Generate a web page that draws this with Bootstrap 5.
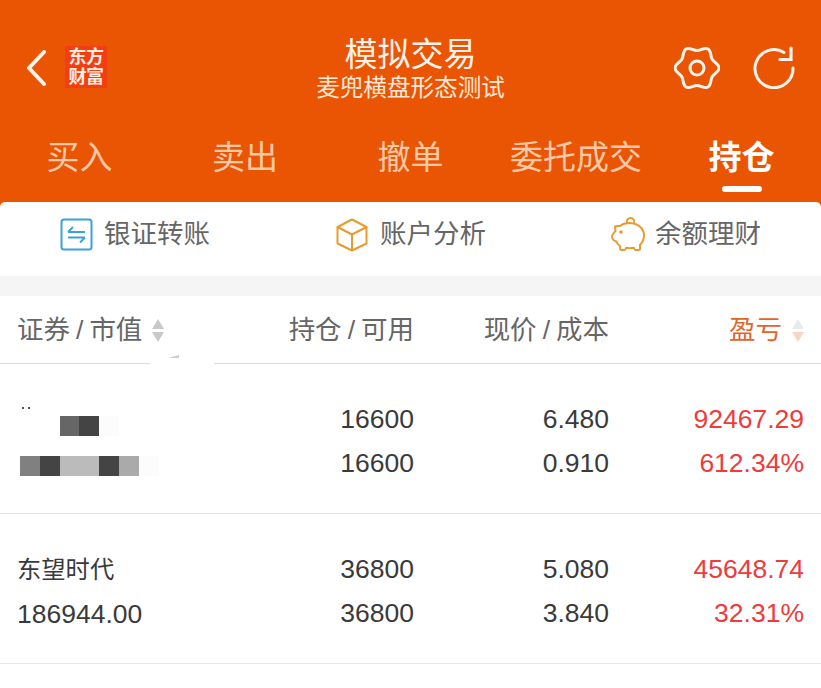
<!DOCTYPE html>
<html lang="zh-CN">
<head>
  <meta charset="UTF-8" />
  <meta name="viewport" content="width=device-width, initial-scale=1.0"/>
  <title>模拟交易</title>
  <link href="https://cdn.jsdelivr.net/npm/bootstrap@5.3.2/dist/css/bootstrap.min.css" rel="stylesheet"/>
  <style>
    html, body { height: 688px; overflow: hidden; }
    body { background: #fff; font-family: "Liberation Sans", "Noto Sans CJK SC", sans-serif; color: #3a3a3a; }
    .top-head { background: #ea5504; height: 212px; color: #fff; }
    .title-row { height: 122px; padding: 42px 26px 0 25px; }
    .back-icon { margin-top: 8px; }
    .logo-box { width: 42px; height: 42px; margin: 4px 0 0 18px; padding-top: 1px; background: #f43e12; color: #fdeee2; font-size: 18px; line-height: 20px; font-weight: 700; text-align: center; letter-spacing: -.5px; }
    .title-main { font-size: 33px; line-height: 44px; color: #fdf3ea; }
    .title-sub { font-size: 23.6px; line-height: 26px; color: #fde9da; margin-top: -2px; }
    .title-mid { left: 0; right: 0; top: 33px; }
    .head-icons { gap: 33px; margin-top: 3px; }
    .tab-row { display: grid; grid-template-columns: repeat(5, 165.5px); justify-content: center; height: 80px; margin-top: -4px; }
    .tab-item { font-size: 33px; line-height: 44px; padding-top: 18px; color: #f9c9a6; text-align: center; }
    .tab-on { color: #fff; font-weight: 700; }
    .tab-on::after { content: ""; display: block; width: 40px; height: 6px; border-radius: 3px; background: #fff; margin: 6px auto 0; }
    .panel { background: #fff; border-radius: 5px 5px 0 0; margin-top: -10px; height: 74px; padding-bottom: 9px; }
    .quick-item { font-size: 26.5px; color: #666; gap: 11px; }
    .q-one { margin-left: 60px; }
    .q-two { margin-left: 126px; gap: 12px; }
    .q-three { margin-left: 125px; gap: 9px; }
    .gray-gap { background: #f5f5f5; height: 20px; }
    .cols { display: grid; grid-template-columns: 197px 200px 195px 195px; padding: 0 17px; }
    .table-head { height: 68px; border-bottom: 1px solid #ddd; font-size: 26.5px; color: #666; line-height: 69px; }
    .sl { margin: 0 6px; }
    .sort-arrows { gap: 3px; margin-left: 10px; }
    .arr { width: 0; height: 0; border-left: 6.5px solid transparent; border-right: 6.5px solid transparent; }
    .arr-up { border-bottom: 10px solid #c9c9c9; }
    .arr-down { border-top: 10px solid #c9c9c9; }
    .arr-up.pale { border-bottom-color: #e9e9ee; }
    .arr-down.pale { border-top-color: #f8d5c3; }
    .profit-head { color: #e2662a; }
    .line-fix { left: 150px; top: 352px; width: 64px; height: 13px; background: #fff; }
    .line-fix::before { content: ""; position: absolute; left: 18px; top: 3px; border-left: 11px solid transparent; border-bottom: 3px solid #ccc; }
    .stock-row { height: 150px; border-bottom: 1px solid #e6e6e6; padding-top: 33px; font-size: 26.5px; line-height: 44px; }
    .stock-name { font-size: 24.3px; }
    .up-num { color: #ee3b3b; }
    .specks { display: flex; gap: 4px; height: 2px; margin: 10px 0 7px 5px; }
    .speck { width: 2px; height: 2px; background: #555; }
    .mosaic { display: flex; height: 20px; margin-left: 3px; }
    .mosaic-low { margin-top: 20px; }
    .tile { width: 19.8px; height: 20px; }
    .t-skip { background: transparent; }
    .t1 { background: #fcfcfc; } .t2 { background: #666; } .t3 { background: #444; }
    .t4 { background: #808080; } .t5 { background: #bbb; } .t6 { background: #aaa; }
  </style>
</head>
<body>
  <div class="top-head position-relative">
    <div class="title-row d-flex align-items-start">
      <svg width="22" height="36" viewBox="0 0 22 36" class="back-icon flex-shrink-0"><path d="M19 2 4 18l15 16" fill="none" stroke="#fdf3ea" stroke-width="4" stroke-linecap="round" stroke-linejoin="round"/></svg>
      <div class="logo-box flex-shrink-0">东方<br>财富</div>
      <div class="head-icons ms-auto d-flex">
        <svg width="46" height="46" viewBox="0 0 46 46"><path d="M45 23C45 27 40.160 28.290 38.160 31.750 36.160 35.210 37.460 40.050 34 42.050 30.540 44.050 27 40.500 23 40.500S15.460 44.050 12 42.050C8.540 40.050 9.840 35.210 7.840 31.750 5.840 28.290 1 27 1 23S5.840 17.710 7.840 14.250C9.840 10.790 8.540 5.950 12 3.950 15.460 1.950 19 5.500 23 5.500S30.540 1.950 34 3.950C37.460 5.950 36.160 10.790 38.160 14.250 40.160 17.710 45 19 45 23Z" fill="none" stroke="#fdf3ea" stroke-width="3"/><circle cx="23" cy="23" r="7" fill="none" stroke="#fdf3ea" stroke-width="3"/></svg>
        <svg width="42" height="44" viewBox="0 0 42 44"><path d="M31 7.500A19 19 0 1 0 40 23" fill="none" stroke="#fdf3ea" stroke-width="3" stroke-linecap="round"/><path d="M38 3v11.500H27" fill="none" stroke="#fdf3ea" stroke-width="3.200" stroke-linecap="round"/></svg>
      </div>
      <div class="title-mid position-absolute text-center">
        <div class="title-main">模拟交易</div>
        <div class="title-sub">麦兜横盘形态测试</div>
      </div>
    </div>
    <div class="tab-row">
      <div class="tab-item">买入</div>
      <div class="tab-item">卖出</div>
      <div class="tab-item">撤单</div>
      <div class="tab-item">委托成交</div>
      <div class="tab-item tab-on">持仓</div>
    </div>
  </div>

  <div class="panel d-flex align-items-center position-relative">
    <div class="quick-item q-one d-flex align-items-center">
      <svg width="33" height="33" viewBox="0 0 33 33"><rect x="1.500" y="1.500" width="30" height="30" rx="2.500" fill="none" stroke="#3d9fdc" stroke-width="2"/><path d="M8 14h17M8 14l5-5M25 19.500H8M25 19.500l-5 5" fill="none" stroke="#3d9fdc" stroke-width="2"/></svg>
      <span>银证转账</span>
    </div>
    <div class="quick-item q-two d-flex align-items-center">
      <svg width="32" height="34" viewBox="0 0 32 34"><path d="M16 1.500 30.500 9v16.500L16 32.500 1.500 25.500V9ZM1.500 9 16 16.500 30.500 9M16 16.500v16" fill="none" stroke="#e89b2f" stroke-width="2" stroke-linejoin="round"/></svg>
      <span>账户分析</span>
    </div>
    <div class="quick-item q-three d-flex align-items-center">
      <svg width="35" height="35" viewBox="0 0 35 35"><path d="M9 9c2.500-2 5.500-3 9-3 8 0 15 4.500 15 12.500 0 4.200-2 7.300-4 9.500v3.500c0 1-.7 1.500-1.500 1.500h-3c-1 0-1.300-.7-1.700-2.200-1.800.4-5.600.4-7.600 0-.4 1.500-.7 2.200-1.700 2.200h-2.900c-.9 0-1.500-.6-1.500-1.500V29c-1.700-1-3-2.500-3.800-4.500C3.500 24 1 22 1 19.500c0-2 1.700-3.400 3.500-5.500L4 9.500C6 8.800 7.500 8.800 9 9Z" fill="none" stroke="#e89b2f" stroke-width="2" stroke-linejoin="round"/><path d="M16 6c-.8-3 1-5 3.500-5S24 3 23 7" fill="none" stroke="#e89b2f" stroke-width="2"/><circle cx="10" cy="15" r="1.800" fill="#e89b2f"/></svg>
      <span>余额理财</span>
    </div>
  </div>
  <div class="gray-gap"></div>

  <div class="table-head cols">
    <div class="d-flex align-items-center">
      <span>证券<span class="sl">/</span>市值</span>
      <span class="sort-arrows d-flex flex-column"><i class="arr arr-up"></i><i class="arr arr-down"></i></span>
    </div>
    <div class="text-end">持仓<span class="sl">/</span>可用</div>
    <div class="text-end">现价<span class="sl">/</span>成本</div>
    <div class="d-flex justify-content-end align-items-center profit-head">
      <span>盈亏</span>
      <span class="sort-arrows d-flex flex-column"><i class="arr arr-up pale"></i><i class="arr arr-down pale"></i></span>
    </div>
  </div>

  <div class="stock-row cols">
    <div>
      <div class="specks"><i class="speck"></i><i class="speck"></i></div>
      <div class="mosaic"><i class="tile t-skip"></i><i class="tile t-skip"></i><i class="tile t2"></i><i class="tile t3"></i><i class="tile t1"></i></div>
      <div class="mosaic mosaic-low"><i class="tile t4"></i><i class="tile t3"></i><i class="tile t5"></i><i class="tile t5"></i><i class="tile t3"></i><i class="tile t6"></i><i class="tile t1"></i></div>
    </div>
    <div class="text-end">16600<br>16600</div>
    <div class="text-end">6.480<br>0.910</div>
    <div class="text-end up-num">92467.29<br>612.34%</div>
  </div>

  <div class="stock-row cols">
    <div><span class="stock-name">东望时代</span><br>186944.00</div>
    <div class="text-end">36800<br>36800</div>
    <div class="text-end">5.080<br>3.840</div>
    <div class="text-end up-num">45648.74<br>32.31%</div>
  </div>

  <div class="line-fix position-absolute"></div>
</body>
</html>
